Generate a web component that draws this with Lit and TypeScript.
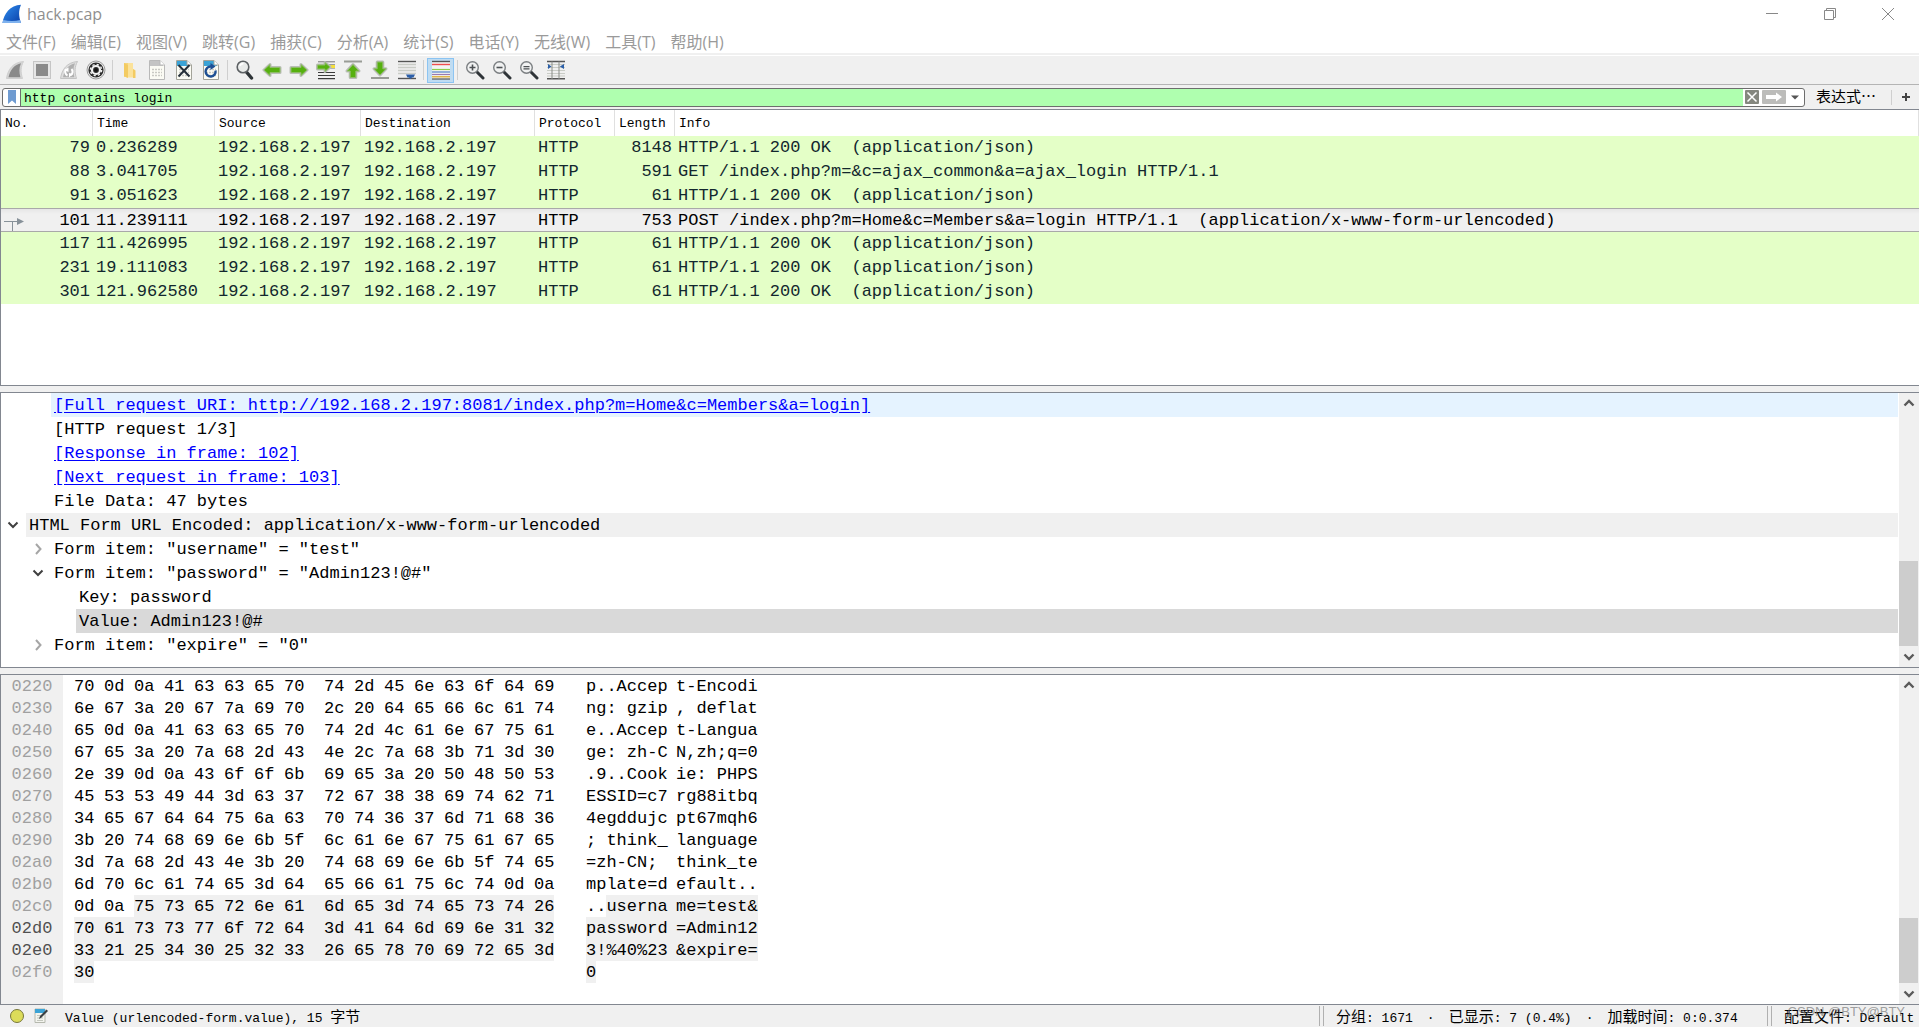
import { LitElement, html, svg, css, nothing } from "lit";
import { customElement, property, state } from "lit/decorators.js";
import { classMap } from "lit/directives/class-map.js";

const fin = (fill: string, edge: string) => svg`
  <path d="M1.5 18.5C3 9 8 2.5 18.5 1.5C15.5 7 15.5 12 17.5 18.5Z" fill="${fill}" stroke="${edge}" stroke-width="1"/>`;

const sheet = (bar: string, dim = false) => svg`
  <path d="M2.5 .5H13L17.5 5V19.5H2.5Z" fill="#fbfbf4" stroke="${dim ? "#b9b9b9" : "#a3a39a"}"/>
  <path d="M3 1H12.8L16 4.2V6H3Z" fill="${bar}"/>
  <path d="M13 .5V5H17.5" fill="#fff" stroke="${dim ? "#b9b9b9" : "#a3a39a"}"/>
  <path d="M5 9.500H15M5 12.500H15M5 15.500H15" stroke="#c9c9c4" stroke-width="1.6" stroke-dasharray="2 1"/>`;

const lens = (mark: unknown) => svg`
  <path d="M12 12L18 18" stroke="#2f3438" stroke-width="3" stroke-linecap="round"/>
  <circle cx="7.5" cy="7.5" r="5.8" fill="#f1f2f2" stroke="#7b7f82" stroke-width="1.4"/>${mark}`;

const greenArrow = (d: string) => svg`
  <path d="${d}" fill="#56b00f" stroke="#b9bdb6" stroke-width="3" stroke-linejoin="round"/>
  <path d="${d}" fill="#56b00f" stroke="#8fbd68" stroke-width="1" stroke-linejoin="round"/>`;

const icons: Record<string, unknown> = {
  start: svg`${fin("#d4d4d4", "#cfcfcf")}<path d="M3.5 17.3C5 10 9.5 4.5 16 3.2C13.8 8 14.2 12.5 15.4 17.3Z" fill="#8a8a8a"/>`,
  stop: svg`<rect x="1.5" y="1.5" width="17" height="17" fill="#e6e6e6" stroke="#c6c6c6"/><rect x="4" y="4" width="12" height="12" fill="#8a8a8a"/>`,
  restart: svg`${fin("#dedede", "#c4c4c4")}<path d="M4 17.3C5.5 10 9.5 4.5 16 3.2C13.8 8 14.2 12.5 15.4 17.3Z" fill="#b0b0b0"/>
    <path d="M7 9.5A4 4 0 0 0 8.5 15.5M12.5 9A4 4 0 0 1 11.5 15.2" fill="none" stroke="#fff" stroke-width="2"/><path d="M5 10L9.5 7.5V12Z M14 14L10 17.5V13Z" fill="#fff"/>`,
  options: svg`<circle cx="10" cy="10" r="9" fill="#e9e9e9" stroke="#9c9c9c"/><circle cx="10" cy="10" r="7.6" fill="#2c2c2c"/>
    <circle cx="10" cy="10" r="4" fill="none" stroke="#f2f2f2" stroke-width="2.2"/><circle cx="10" cy="10" r="5.6" fill="none" stroke="#f2f2f2" stroke-width="1.4" stroke-dasharray="2.2 2.2"/><circle cx="10" cy="10" r="1.8" fill="#111"/>`,
  open: svg`<path d="M4 3H9V17H4Z" fill="#f6d57c"/><path d="M8 3H13V9L15 10V17.5H6V15L8 14Z" fill="#fbe29a"/><path d="M4 3L8 5V18L4 16Z" fill="#f3cb62"/><path d="M13 9L15.5 10.5V18H13Z" fill="#f3cb62"/>`,
  save: sheet("#c4c4c4", true),
  close: svg`${sheet("#3ba3d6")}<path d="M4.5 5L15.5 16.500M15.5 5L4.5 16.500" stroke="#26303a" stroke-width="2"/>`,
  reload: svg`${sheet("#3ba3d6")}<path d="M14.5 10.500A5 5 0 1 1 10 6.500" fill="none" stroke="#1e4f93" stroke-width="2.4"/><path d="M9.5 3L14.500 6.500L9.5 10Z" fill="#1e4f93"/>`,
  find: svg`<path d="M11 11.5L16.5 18" stroke="#2f3438" stroke-width="3.4" stroke-linecap="round"/><circle cx="8" cy="7" r="5.8" fill="#e9ebea" stroke="#5d6164" stroke-width="1.6"/><path d="M5 6A3.4 3.4 0 0 1 8.5 3.6" fill="none" stroke="#fff" stroke-width="1.6"/>`,
  back: greenArrow("M2 10L8 4.5V7.5H18V12.5H8V15.5Z"),
  forward: greenArrow("M18 10L12 4.5V7.5H2V12.5H12V15.5Z"),
  goto: svg`<path d="M2 1.8H19M13 4.8H19M13 8H19" stroke="#777"/><path d="M14 6.5H19" stroke="#f5df3c" stroke-width="3"/><path d="M2 12.5H19M2 15.5H19M2 18.6H19" stroke="#3b3b3b" stroke-width="1.2"/>
    ${greenArrow("M14 7L9 2.6V5H1.5V9H9V11.4Z")}`,
  first: svg`<path d="M1 1.5H19" stroke="#999c96" stroke-width="2"/>${greenArrow("M10 4.5L16 11H12.8V17.5H7.2V11H4Z")}`,
  last: svg`<path d="M1 18H19" stroke="#999c96" stroke-width="2"/>${greenArrow("M10 15L4 8.8H7.2V2H12.8V8.8H16Z")}`,
  autoscroll: svg`<path d="M1 1.5H19" stroke="#555" stroke-width="1.4"/><path d="M1 4.5H19M1 7.5H19M1 10.5H19M1 13.5H19" stroke="#c9ccc6" stroke-width="1.4"/><path d="M1 18.5H19" stroke="#555" stroke-width="1.4"/><path d="M9 14.5H18L16.5 17.5H15L13.5 19L12 17.5H10.5Z" fill="#2c5fa8"/>`,
  colorize: svg`<rect x="1" y="1" width="18" height="18" fill="#f4f6f4"/><path d="M1 1.5H19" stroke="#555" stroke-width="1.4"/><path d="M1 4.500H19" stroke="#ef4e4e" stroke-width="1.4"/><path d="M1 9.500H19" stroke="#8fce4a" stroke-width="1.2"/><path d="M1 12H19" stroke="#4f7fc8" stroke-width="1.2"/><path d="M1 14.500H19" stroke="#9a7ab0" stroke-width="1.2"/><path d="M1 16.800H19" stroke="#d9a420" stroke-width="1.2"/><path d="M1 19H19" stroke="#555" stroke-width="1.2"/>`,
  zoomIn: lens(svg`<path d="M4.5 7.5H10.5M7.5 4.5V10.5" stroke="#4d5154" stroke-width="1.6"/>`),
  zoomOut: lens(svg`<path d="M4.5 7.5H10.5" stroke="#4d5154" stroke-width="1.6"/>`),
  zoomReset: lens(svg`<path d="M4.5 6.6H10.5M4.5 8.8H10.5" stroke="#4d5154" stroke-width="1.3"/>`),
  columns: svg`<path d="M1 4.5H19M1 7.5H19M1 10.5H19M1 13.5H19M1 16H19" stroke="#c9ccc6" stroke-width="1.2"/><path d="M1 1.5H19M1 18.8H19" stroke="#555" stroke-width="1.4"/><path d="M6 1.5V19M13 1.5V19" stroke="#8a8d88"/><path d="M2 4L5.500 6.500L2 9Z M18 4L13.800 6.500L18 9Z" fill="#2c5fa8"/>`,
};

const toolbar: [string, string][][] = [
  [["start", "开始捕获"], ["stop", "停止捕获"], ["restart", "重新开始捕获"], ["options", "捕获选项"]],
  [["open", "打开"], ["save", "保存"], ["close", "关闭"], ["reload", "重新加载"]],
  [["find", "查找分组"], ["back", "后退"], ["forward", "前进"], ["goto", "转到分组"], ["first", "首个分组"], ["last", "最新分组"], ["autoscroll", "自动滚动"]],
  [["colorize", "着色分组列表"]],
  [["zoomIn", "放大"], ["zoomOut", "缩小"], ["zoomReset", "普通大小"], ["columns", "调整列宽"]],
];

const menus: [string, string][] = [
  ["文件", "(F)"], ["编辑", "(E)"], ["视图", "(V)"], ["跳转", "(G)"], ["捕获", "(C)"],
  ["分析", "(A)"], ["统计", "(S)"], ["电话", "(Y)"], ["无线", "(W)"], ["工具", "(T)"], ["帮助", "(H)"],
];

const HOST = "192.168.2.197";
const OK = "HTTP/1.1 200 OK  (application/json)";
const packets: [number, string, number, string][] = [
  [79, "0.236289", 8148, OK],
  [88, "3.041705", 591, "GET /index.php?m=&c=ajax_common&a=ajax_login HTTP/1.1"],
  [91, "3.051623", 61, OK],
  [101, "11.239111", 753, "POST /index.php?m=Home&c=Members&a=login HTTP/1.1  (application/x-www-form-urlencoded)"],
  [117, "11.426995", 61, OK],
  [231, "19.111083", 61, OK],
  [301, "121.962580", 61, OK],
];

interface Node { depth: number; text: string; link?: boolean; open?: boolean; tone?: string }
const nodes: Node[] = [
  { depth: 1, text: "[Full request URI: http://192.168.2.197:8081/index.php?m=Home&c=Members&a=login]", link: true, tone: "hover" },
  { depth: 1, text: "[HTTP request 1/3]" },
  { depth: 1, text: "[Response in frame: 102]", link: true },
  { depth: 1, text: "[Next request in frame: 103]", link: true },
  { depth: 1, text: "File Data: 47 bytes" },
  { depth: 0, text: "HTML Form URL Encoded: application/x-www-form-urlencoded", open: true, tone: "section" },
  { depth: 1, text: 'Form item: "username" = "test"', open: false },
  { depth: 1, text: 'Form item: "password" = "Admin123!@#"', open: true },
  { depth: 2, text: "Key: password" },
  { depth: 2, text: "Value: Admin123!@#", tone: "selected" },
  { depth: 1, text: 'Form item: "expire" = "0"', open: false },
];

const dump = [
  "70 0d 0a 41 63 63 65 70 74 2d 45 6e 63 6f 64 69",
  "6e 67 3a 20 67 7a 69 70 2c 20 64 65 66 6c 61 74",
  "65 0d 0a 41 63 63 65 70 74 2d 4c 61 6e 67 75 61",
  "67 65 3a 20 7a 68 2d 43 4e 2c 7a 68 3b 71 3d 30",
  "2e 39 0d 0a 43 6f 6f 6b 69 65 3a 20 50 48 50 53",
  "45 53 53 49 44 3d 63 37 72 67 38 38 69 74 62 71",
  "34 65 67 64 64 75 6a 63 70 74 36 37 6d 71 68 36",
  "3b 20 74 68 69 6e 6b 5f 6c 61 6e 67 75 61 67 65",
  "3d 7a 68 2d 43 4e 3b 20 74 68 69 6e 6b 5f 74 65",
  "6d 70 6c 61 74 65 3d 64 65 66 61 75 6c 74 0d 0a",
  "0d 0a 75 73 65 72 6e 61 6d 65 3d 74 65 73 74 26",
  "70 61 73 73 77 6f 72 64 3d 41 64 6d 69 6e 31 32",
  "33 21 25 34 30 25 32 33 26 65 78 70 69 72 65 3d",
  "30",
].map((line) => line.split(" "));
const DUMP_BASE = 0x220;
const BODY_START = 0x2c2;
const FIELD_ROWS = [0x2d0, 0x2e0];

const chevron = (down: boolean) => html`<svg class="chev" viewBox="0 0 12 12" aria-hidden="true">
  <path d=${down ? "M1.5 3.5L6 8L10.5 3.5" : "M4 1L8.5 6L4 11"} fill="none" stroke=${down ? "#404040" : "#a6a6a6"} stroke-width="2"/></svg>`;

@customElement("scroll-rail")
class ScrollRail extends LitElement {
  @property({ type: Number }) before = 1;
  @property({ type: Number }) thumb = 1;
  @property({ type: Number }) after = 0;

  static styles = css`
    :host { display: flex; flex-direction: column; flex: none; width: 20px; background: #f0f0f0; }
    button { height: 20px; border: 0; padding: 0; background: none; display: grid; place-items: center; }
    svg { width: 12px; height: 12px; }
    .track { flex: 1; display: flex; flex-direction: column; }
    .thumb { background: #cdcdcd; margin-right: 1px; }
  `;

  render() {
    return html`
      <button aria-label="向上滚动"><svg viewBox="0 0 12 12"><path d="M1.5 8.5L6 4L10.5 8.5" fill="none" stroke="#5a5a5a" stroke-width="2.4"/></svg></button>
      <div class="track">
        <div style="flex:${this.before}"></div>
        <div class="thumb" style="flex:${this.thumb}"></div>
        <div style="flex:${this.after}"></div>
      </div>
      <button aria-label="向下滚动"><svg viewBox="0 0 12 12"><path d="M1.5 3.5L6 8L10.5 3.5" fill="none" stroke="#5a5a5a" stroke-width="2.4"/></svg></button>`;
  }
}

@customElement("app-root")
class AppRoot extends LitElement {
  @state() private filter = "http contains login";
  @state() private selected = 101;

  static styles = css`
    :host {
      display: flex; flex-direction: column; height: 100vh; overflow: hidden;
      background: #f0f0f0; color: #000;
      --ui: "Open Sans", "Noto Sans CJK SC", sans-serif;
      --fixed: "Liberation Mono", "Noto Sans CJK SC", monospace;
      --edge: #828790;
    }
    *, *::before { box-sizing: border-box; }
    button { font: inherit; color: inherit; border: 0; padding: 0; background: none; }

    .title { display: flex; align-items: center; height: 28px; background: #fff; padding: 0 2px; font: 16px/24px var(--ui); color: #8f8f8f; }
    .logo { width: 20px; height: 20px; margin-right: 5px; }
    .title h1 { flex: 1; margin: 0; font: inherit; }
    .win { width: 58px; height: 28px; display: grid; place-items: center; }
    .win svg { width: 14px; height: 14px; }

    .menu { display: flex; gap: 15px; height: 27px; padding: 0 6px; background: #fff; border-bottom: 2px solid #f0f0f0; font: 16px/28px var(--ui); color: #9a9a9a; }

    .tools { display: flex; align-items: center; height: 30px; padding: 0 1px; border-top: 1px solid #fff; border-bottom: 1px solid #b4b4b4; }
    .tool { width: 27px; height: 25px; display: grid; place-items: center; border: 1px solid transparent; }
    .tool.on { background: #bfdcf2; border-color: #8cc4f2; }
    .tool svg { width: 20px; height: 20px; }
    .sep { width: 1px; height: 20px; margin: 0 3px; background: #cfcfcf; }

    .filter { display: flex; align-items: center; height: 24px; padding: 0 8px 0 2px; font: 15px/20px var(--fixed); }
    .box { flex: 1; display: flex; align-items: center; height: 19px; border: 1px solid #6d6d6d; border-radius: 3px; background: #fff; overflow: hidden; }
    .mark { width: 18px; height: 17px; display: grid; place-items: center; border-right: 1px solid #6d6d6d; }
    .mark svg { width: 8px; height: 14px; }
    .box input { flex: 1; min-width: 0; height: 17px; border: 0; outline: 0; padding: 2px 3px 0; background: #afffaf; font: 13px/15px var(--fixed); color: #000; }
    .clear, .apply { height: 14px; margin-left: 2px; border-radius: 1px; display: grid; place-items: center; }
    .clear { width: 14px; background: #85877f; }
    .apply { width: 24px; margin-left: 3px; background: #bcbcba; }
    .drop { width: 18px; height: 17px; display: grid; place-items: center; }
    .expr { margin-left: 11px; padding-top: 4px; font: 15px/18px var(--fixed); }
    .filter .sep { height: 15px; margin: 0 9px 0 15px; }
    .add { width: 10px; height: 10px; }
    .add svg { display: block; width: 10px; height: 10px; }

    .pane { min-height: 0; display: flex; overflow: hidden; background: #fff; border: 1px solid var(--edge); border-right: 0; font: 17px/24px var(--fixed); }
    .list { flex: 277 1 0; }
    .tree { flex: 276 1 0; margin-top: 6px; }
    .bytes { flex: 331 1 0; margin-top: 6px; }
    .fill { flex: 1; min-width: 0; overflow: hidden; }

    table { width: 100%; table-layout: fixed; border-collapse: separate; border-spacing: 0; }
    th { height: 26px; padding: 2px 0 0 4px; border-right: 1px solid #e0e0e0; text-align: left; font: 13px/24px var(--fixed); }
    td { height: 24px; padding: 0 3px; background: #e4ffc7; color: #12272e; line-height: 24px; white-space: pre; overflow: hidden; }
    .c-no { width: 92px; } .c-time { width: 122px; } .c-src { width: 146px; } .c-dst { width: 174px; } .c-pro { width: 80px; } .c-len { width: 60px; }
    td.num { text-align: right; }
    .no { display: flex; justify-content: space-between; align-items: center; height: 24px; }
    .no svg { width: 20px; height: 22px; flex: none; }
    .no span { flex: 1; }
    tr.sel td { padding-top: 1px; line-height: 21px; background: linear-gradient(#e6e6e6, #f0f0f0 5px); color: #000; border-top: 1px solid #a9a9a9; border-bottom: 1px solid #a9a9a9; }
    tr.sel .no { height: 21px; }

    .node { display: flex; height: 24px; margin-right: 1px; white-space: pre; }
    .twist { width: 25px; display: grid; place-items: center; padding-right: 2px; }
    .chev { width: 12px; height: 12px; display: block; }
    .indent { width: 25px; }
    .label { flex: 1; padding: 2px 0 0 3px; line-height: 22px; }
    .hover .label { background: #e5f3ff; }
    .section .label { background: #f0f0f0; }
    .selected .label { background: #d9d9d9; }
    .label a { color: #00f; text-decoration: underline; text-underline-offset: 2px; }

    .dump { flex: 1; display: grid; grid-template-columns: 62px 1fr; line-height: 24px; }
    .offsets { background: #f0f0f0; text-align: center; color: #a0a0a0; }
    .offsets div { height: 22px; }
    .offsets .near { color: #505050; }
    .rows { padding-left: 11px; }
    .row { display: flex; height: 22px; }
    .hex { display: flex; width: 512px; }
    .b { width: 30px; } .b.mid { width: 40px; } .b.end { width: 20px; }
    .asc { display: flex; white-space: pre; }
    .g { display: flex; width: 90px; } .g.end { width: 80px; } .g.short { width: 10px; }
    .g .hl { flex: 1; }
    .hl { background: #f0f0f0; }

    .status { display: flex; align-items: center; height: 22px; padding: 0 4px 0 9px; font: 13px/18px var(--fixed); white-space: pre; }
    .status svg { width: 16px; height: 16px; margin-right: 8px; }
    .msg { flex: 1; padding: 5px 0 0 8px; }
    .cjk { font-size: 15px; }
    .rule { width: 5px; height: 20px; border: solid #b0b0b0; border-width: 0 1px; }
    .counts { display: flex; gap: 14px; width: 443px; padding: 5px 0 0 12px; }
    .profile { width: 143px; padding: 5px 0 0 12px; }
    .stamp { position: absolute; right: 14px; bottom: 6px; font: 13px/18px "Liberation Sans", sans-serif; color: rgba(110, 110, 110, .65); pointer-events: none; }
  `;

  private isField(at: number) { return at >= BODY_START; }

  private asciiGroup(row: string[], base: number, from: number) {
    const part = row.slice(from, from + 8);
    if (!part.length) return nothing;
    const chars = part.map((h) => { const c = parseInt(h, 16); return c < 32 || c > 126 ? "." : String.fromCharCode(c); });
    const cut = chars.findIndex((_, i) => this.isField(base + from + i));
    const plain = cut < 0 ? chars : chars.slice(0, cut);
    const marked = cut < 0 ? [] : chars.slice(cut);
    return html`<span class=${classMap({ g: true, end: from === 8, short: part.length < 8 })}>${plain.length ? html`<span>${plain.join("")}</span>` : nothing}${marked.length ? html`<span class="hl">${marked.join("")}</span>` : nothing}</span>`;
  }

  render() {
    return html`
      <header class="title">
        <svg class="logo" viewBox="0 0 20 20" aria-hidden="true">
          <defs><linearGradient id="lg" x1="0" y1="0" x2="1" y2="1"><stop offset="0" stop-color="#2f8ff0"/><stop offset="1" stop-color="#0a3fa8"/></linearGradient></defs>
          <path d="M.5 19C2 9.5 8 1.5 19 .8C16.5 6.500 16.500 12 19 19Z" fill="url(#lg)"/>
          <path d="M.5 19L1.200 16Q10 18 18.200 16L19 19Z" fill="#7fb2ee"/>
        </svg>
        <h1>hack.pcap</h1>
        <button class="win" aria-label="最小化"><svg viewBox="0 0 14 14"><path d="M1 6.500H13" stroke="#888"/></svg></button>
        <button class="win" aria-label="还原"><svg viewBox="0 0 14 14" fill="none" stroke="#888"><path d="M1.500 3.500H10.500V12.500H1.500ZM3.500 3.500V1.500H12.500V10.500H10.500"/></svg></button>
        <button class="win" aria-label="关闭窗口"><svg viewBox="0 0 14 14"><path d="M1 1L13 13M13 1L1 13" stroke="#888"/></svg></button>
      </header>

      <nav class="menu">${menus.map(([name, key]) => html`<button>${name}${key}</button>`)}</nav>

      <div class="tools">
        ${toolbar.map((group, i) => html`${i ? html`<div class="sep"></div>` : nothing}${group.map(([id, label]) => html`
          <button class=${classMap({ tool: true, on: id === "colorize" })} aria-label=${label}><svg viewBox="0 0 20 20">${icons[id]}</svg></button>`)}`)}
      </div>

      <div class="filter">
        <div class="box">
          <button class="mark" aria-label="书签"><svg viewBox="0 0 8 14"><path d="M0 0H8V14L4 10.500L0 14Z" fill="#6f9bd1"/></svg></button>
          <input type="text" aria-label="显示过滤器" .value=${this.filter} @input=${(e: Event) => (this.filter = (e.target as HTMLInputElement).value)} />
          <button class="clear" aria-label="清除" @click=${() => (this.filter = "")}><svg width="14" height="14" viewBox="0 0 14 14"><path d="M2.500 2.500L11.500 11.500M11.500 2.500L2.500 11.500" stroke="#fff" stroke-width="1.500"/></svg></button>
          <button class="apply" aria-label="应用"><svg width="18" height="10" viewBox="0 0 18 10"><path d="M1 3H11V.5L17 5L11 9.500V7H1Z" fill="#fff"/></svg></button>
          <button class="drop" aria-label="最近的过滤器"><svg width="8" height="5" viewBox="0 0 8 5"><path d="M0 .5H8L4 4.500Z" fill="#555"/></svg></button>
        </div>
        <button class="expr">表达式⋯</button>
        <div class="sep"></div>
        <button class="add" aria-label="添加"><svg viewBox="0 0 10 10"><path d="M5 1V9M1 5H9" stroke="#444" stroke-width="2"/></svg></button>
      </div>

      <section class="pane list">
        <div class="fill">
          <table>
            <colgroup><col class="c-no" /><col class="c-time" /><col class="c-src" /><col class="c-dst" /><col class="c-pro" /><col class="c-len" /><col /></colgroup>
            <thead><tr>${["No.", "Time", "Source", "Destination", "Protocol", "Length", "Info"].map((h) => html`<th>${h}</th>`)}</tr></thead>
            <tbody>
              ${packets.map(([no, time, len, info]) => html`
                <tr class=${no === this.selected ? "sel" : ""} @click=${() => (this.selected = no)}>
                  <td class="num"><div class="no">${no === 101 ? html`<svg viewBox="0 0 20 22" aria-hidden="true"><path d="M0 11.500H14M8.500 11.500V22" stroke="#879199" fill="none"/><path d="M13 8L20 11.500L13 15Z" fill="#879199"/></svg>` : nothing}<span>${no}</span></div></td>
                  <td>${time}</td><td>${HOST}</td><td>${HOST}</td><td>HTTP</td><td class="num">${len}</td><td>${info}</td>
                </tr>`)}
            </tbody>
          </table>
        </div>
      </section>

      <section class="pane tree">
        <div class="fill" role="tree">
          ${nodes.map((n) => html`<div class="node ${n.tone ?? ""}" role="treeitem">
            ${Array.from({ length: n.depth }, () => html`<span class="indent"></span>`)}
            ${n.open === undefined ? html`<span class="twist"></span>` : html`<button class="twist" aria-label=${n.open ? "折叠" : "展开"}>${chevron(n.open)}</button>`}
            <span class="label">${n.link ? html`<a href="#">${n.text}</a>` : n.text}</span></div>`)}
        </div>
        <scroll-rail .before=${148} .thumb=${85} .after=${1}></scroll-rail>
      </section>

      <section class="pane bytes">
        <div class="dump">
          <div class="offsets">${dump.map((_, i) => {
            const at = DUMP_BASE + i * 16;
            return html`<div class=${FIELD_ROWS.includes(at) ? "near" : ""}>${at.toString(16).padStart(4, "0")}</div>`;
          })}</div>
          <div class="rows">${dump.map((row, i) => {
            const base = DUMP_BASE + i * 16;
            return html`<div class="row">
              <div class="hex">${row.map((h, j) => html`<span class=${classMap({ b: true, mid: j === 7, end: j === row.length - 1, hl: this.isField(base + j) })}>${h}</span>`)}</div>
              <div class="asc">${this.asciiGroup(row, base, 0)}${this.asciiGroup(row, base, 8)}</div>
            </div>`;
          })}</div>
        </div>
        <scroll-rail .before=${223} .thumb=${65} .after=${1}></scroll-rail>
      </section>

      <footer class="status">
        <svg viewBox="0 0 16 16" aria-hidden="true"><circle cx="8" cy="8" r="6.500" fill="#dcdc5a" stroke="#77773a"/></svg>
        <svg viewBox="0 0 16 16" aria-hidden="true"><path d="M2 1H12V14.500H2Z" fill="#f3f4ee" stroke="#b5b8ae"/><path d="M2 1H12V5H2Z" fill="#3ba3d6"/><path d="M4 7.500H10M4 10H10M4 12.500H10" stroke="#c3c6bd"/><path d="M6 11L7 8L13.500 1.500L15 3L8.500 9.500Z" fill="#3a3f42"/></svg>
        <span class="msg">Value (urlencoded-form.value), 15 <span class="cjk">字节</span></span>
        <span class="rule"></span>
        <span class="counts"><span><span class="cjk">分组</span>: 1671</span><span>·</span><span><span class="cjk">已显示</span>: 7 (0.4%)</span><span>·</span><span><span class="cjk">加载时间</span>: 0:0.374</span></span>
        <span class="rule"></span>
        <span class="profile"><span class="cjk">配置文件</span>: Default</span>
      </footer>
      <div class="stamp">CSDN @BTY@BTY</div>
    `;
  }
}
